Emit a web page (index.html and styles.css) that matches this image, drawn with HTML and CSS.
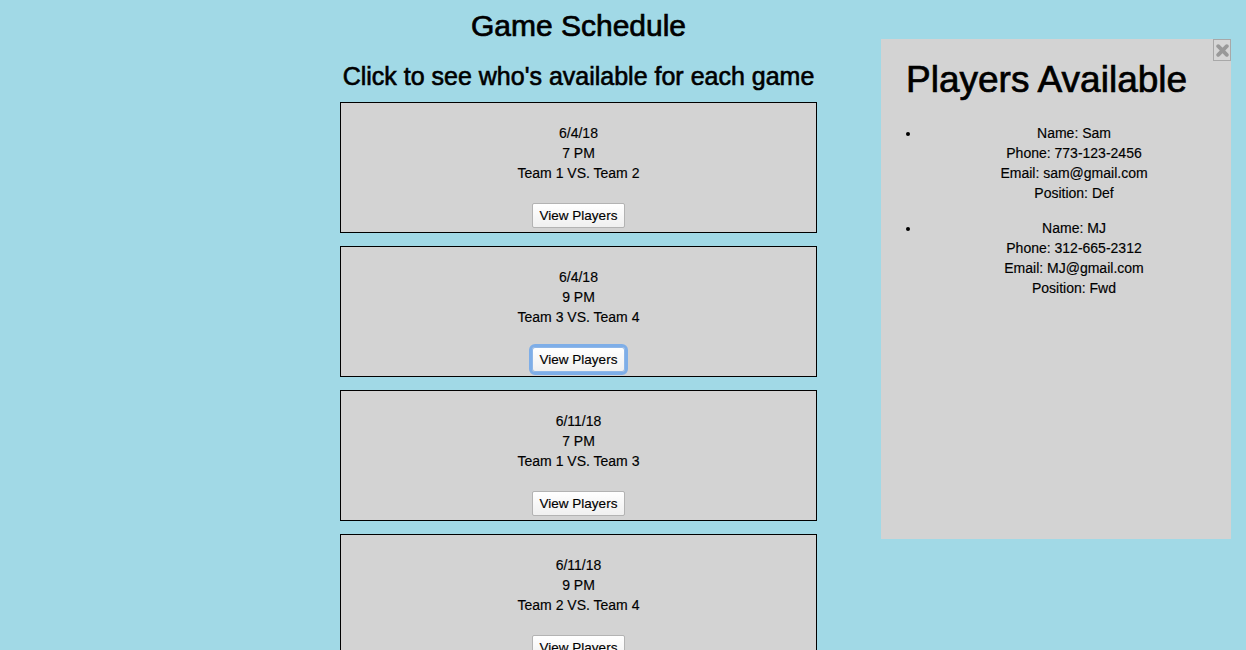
FILE: index.html
```html
<!DOCTYPE html>
<html lang="en">
<head>
<meta charset="utf-8">
<title>Game Schedule</title>
<link rel="stylesheet" href="styles.css">
</head>
<body>
<main class="schedule">
  <h1 class="title">Game Schedule</h1>
  <h2 class="subtitle">Click to see who's available for each game</h2>
  <div class="games">
    <section class="game">
      <p class="game-info">6/4/18<br>7 PM<br>Team 1 VS. Team 2</p>
      <button class="view-btn" type="button">View Players</button>
    </section>
    <section class="game">
      <p class="game-info">6/4/18<br>9 PM<br>Team 3 VS. Team 4</p>
      <button class="view-btn is-focused" type="button">View Players</button>
    </section>
    <section class="game">
      <p class="game-info">6/11/18<br>7 PM<br>Team 1 VS. Team 3</p>
      <button class="view-btn" type="button">View Players</button>
    </section>
    <section class="game">
      <p class="game-info">6/11/18<br>9 PM<br>Team 2 VS. Team 4</p>
      <button class="view-btn" type="button">View Players</button>
    </section>
  </div>
</main>

<aside class="players-panel">
  <button class="close-btn" type="button" aria-label="Close">
    <svg width="13" height="13" viewBox="0 0 13 13" aria-hidden="true">
      <path d="M2.2 2.2 L10.8 10.8 M10.8 2.2 L2.2 10.8" stroke="#999" stroke-width="3.8" stroke-linecap="round"/>
    </svg>
  </button>
  <h1 class="panel-title">Players Available</h1>
  <ul class="player-list">
    <li class="player">Name: Sam<br>Phone: 773-123-2456<br>Email: sam@gmail.com<br>Position: Def</li>
    <li class="player">Name: MJ<br>Phone: 312-665-2312<br>Email: MJ@gmail.com<br>Position: Fwd</li>
  </ul>
</aside>
</body>
</html>
```

FILE: styles.css
```css
html, body {
  margin: 0;
  padding: 0;
}

body {
  background: #a1d9e6;
  font-family: "Liberation Sans", Arial, sans-serif;
  color: #000;
  height: 650px;
  overflow: hidden;
  -webkit-text-stroke: 0.15px #000;
}

.schedule {
  width: 1157px;
  padding-top: 9px;
  display: flex;
  flex-direction: column;
  align-items: center;
}

.title {
  margin: 0;
  font-size: 30px;
  font-weight: normal;
  line-height: 34px;
  -webkit-text-stroke: 0.7px #000;
}

.subtitle {
  margin: 19px 0 0;
  font-size: 25px;
  font-weight: normal;
  line-height: 29px;
  -webkit-text-stroke: 0.6px #000;
}

.games {
  margin-top: 11px;
  display: flex;
  flex-direction: column;
  gap: 13px;
}

.game {
  width: 475px;
  height: 129px;
  border: 1px solid #000;
  background: #d3d3d3;
  display: flex;
  flex-direction: column;
  align-items: center;
  text-align: center;
}

.game-info {
  margin: 20px 0 20px;
  font-size: 14px;
  line-height: 20px;
}

.view-btn {
  font-family: "Liberation Sans", Arial, sans-serif;
  font-size: 13.5px;
  height: 25px;
  padding: 0 7px;
  border: 1px solid #b3b3b3;
  border-radius: 2px;
  background: linear-gradient(#ffffff, #f0f0f0);
  color: #000;
  -webkit-text-stroke: 0.15px #000;
}

.view-btn.is-focused {
  outline: 3px solid #7eaee8;
  outline-offset: 0;
  border-radius: 3px;
  border-color: #8fb7e8;
}

.players-panel {
  position: fixed;
  left: 881px;
  top: 39px;
  width: 350px;
  height: 500px;
  box-sizing: border-box;
  padding: 0 8px;
  background: #d3d3d3;
}

.close-btn {
  position: absolute;
  top: 0;
  right: 0;
  width: 18px;
  height: 22px;
  padding: 0;
  border: 1px solid #a8a8a8;
  background: #d6d6d6;
  display: flex;
  align-items: center;
  justify-content: center;
}

.panel-title {
  margin: 20px 0 22px 17px;
  font-size: 37px;
  font-weight: normal;
  line-height: 42px;
  -webkit-text-stroke: 0.7px #000;
}

.player-list {
  margin: 0;
  padding-left: 32px;
  font-size: 14px;
  line-height: 20px;
}

.player {
  text-align: center;
  padding-left: 4px;
  margin-bottom: 15px;
}
```
